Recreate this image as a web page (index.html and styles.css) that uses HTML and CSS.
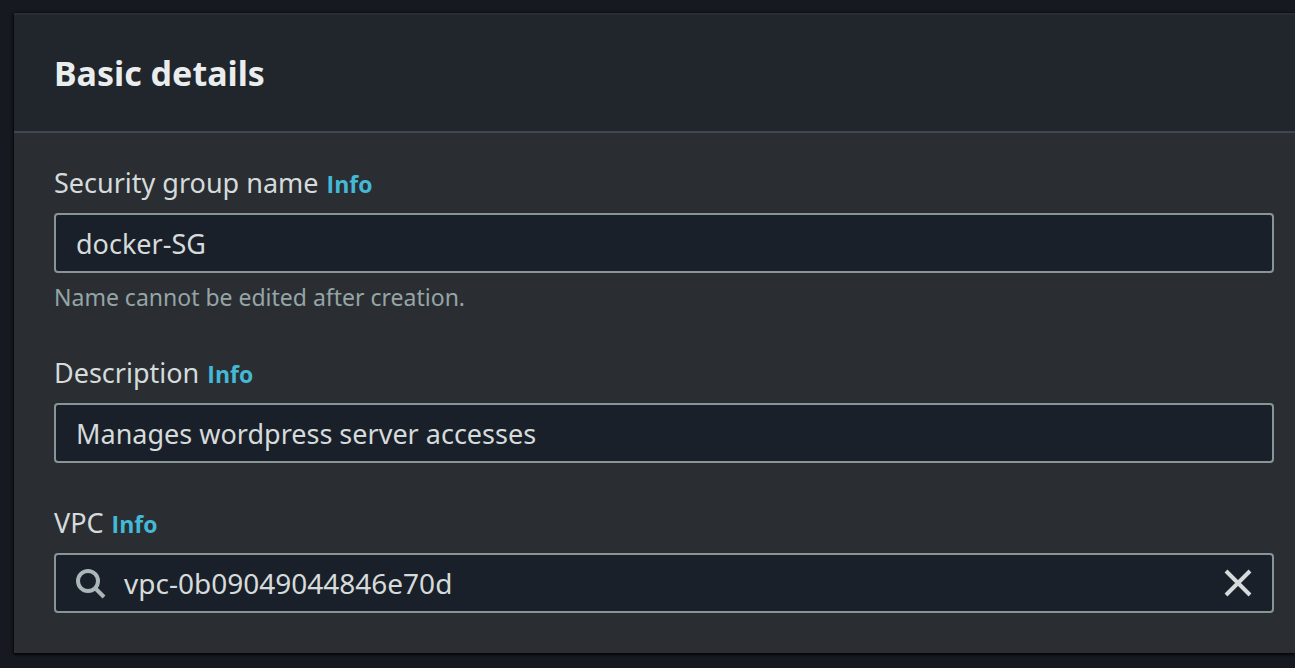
FILE: index.html
```
<!DOCTYPE html>
<html lang="en">
<head>
<meta charset="utf-8">
<title>Basic details</title>
<link rel="stylesheet" href="styles.css">
</head>
<body>
<main class="page">
  <section class="card">
    <header class="card-header">
      <h2 class="card-title">Basic details</h2>
    </header>
    <form class="card-body">
      <div class="field">
        <div class="label-row">
          <label class="label" for="group-name">Security group name</label>
          <a class="info" href="#name-info">Info</a>
        </div>
        <input class="control" id="group-name" type="text" value="docker-SG" aria-describedby="name-hint">
        <p class="hint" id="name-hint">Name cannot be edited after creation.</p>
      </div>
      <div class="field">
        <div class="label-row">
          <label class="label" for="description">Description</label>
          <a class="info" href="#description-info">Info</a>
        </div>
        <input class="control" id="description" type="text" value="Manages wordpress server accesses">
      </div>
      <div class="field">
        <div class="label-row">
          <label class="label" for="vpc">VPC</label>
          <a class="info" href="#vpc-info">Info</a>
        </div>
        <div class="control search">
          <svg class="icon search-icon" viewBox="0 0 32 32" aria-hidden="true"><circle cx="14" cy="14" r="10"/><path d="M21 21l9 9"/></svg>
          <input class="search-input" id="vpc" type="text" value="vpc-0b09049044846e70d">
          <button class="clear" type="button" aria-label="Clear">
            <svg class="icon" viewBox="0 0 32 32" aria-hidden="true"><path d="M4 4l24 24M28 4L4 28"/></svg>
          </button>
        </div>
      </div>
    </form>
  </section>
</main>
</body>
</html>
```

FILE: styles.css
```
* {
  box-sizing: border-box;
}

body {
  margin: 0;
  background: #16191f;
  color: #d5dbdb;
  font-family: "Noto Sans", "Open Sans", sans-serif;
  font-size: 27px;
}

.page {
  padding: 13px 0 15px 14px;
}

.card {
  background: #2a2e33;
  border-top: 2px solid #2a2e33;
  box-shadow: 0 2px 2px rgba(0, 0, 0, 0.7), -1px 0 3px rgba(0, 0, 0, 0.6);
}

.card-header {
  padding: 34px 40px;
  background: #21252c;
  border-bottom: 2px solid #414750;
}

.card-title {
  margin: 0;
  color: #eaeded;
  font-size: 34px;
  font-weight: 700;
  line-height: 48px;
}

.card-body {
  display: flex;
  flex-direction: column;
  gap: 38px;
  padding: 28px 21px 40px 40px;
}

.field {
  display: flex;
  flex-direction: column;
  gap: 8px;
}

.label-row {
  display: flex;
  align-items: baseline;
  gap: 8px;
  line-height: 44px;
}

.info {
  color: #44b9d6;
  font-family: "Open Sans", "Noto Sans", sans-serif;
  font-size: 23px;
  font-weight: 700;
  line-height: 32px;
}

.info:not(:hover) {
  text-decoration: none;
}

.control {
  width: 100%;
  height: 60px;
  padding: 0 20px;
  background: #1a2029;
  border: 2px solid #879596;
  border-radius: 4px;
  color: #d5dbdb;
  font: inherit;
}

.hint {
  margin: 0;
  color: #95a5a6;
  font-size: 23px;
  line-height: 32px;
}

.search {
  display: flex;
  align-items: center;
  padding: 0 18px;
  font-size: 28px;
}

.search-input {
  flex: 1;
  min-width: 0;
  height: 100%;
  padding: 0 18px;
  background: transparent;
  border: 0;
  color: inherit;
  font: inherit;
}

.icon {
  display: block;
  width: 32px;
  height: 32px;
  flex: none;
  fill: none;
  stroke: currentColor;
  stroke-width: 4;
}

.search-icon {
  color: #aab7b8;
}

.clear {
  padding: 0;
  background: none;
  border: 0;
  color: #d5dbdb;
  cursor: pointer;
}
```
